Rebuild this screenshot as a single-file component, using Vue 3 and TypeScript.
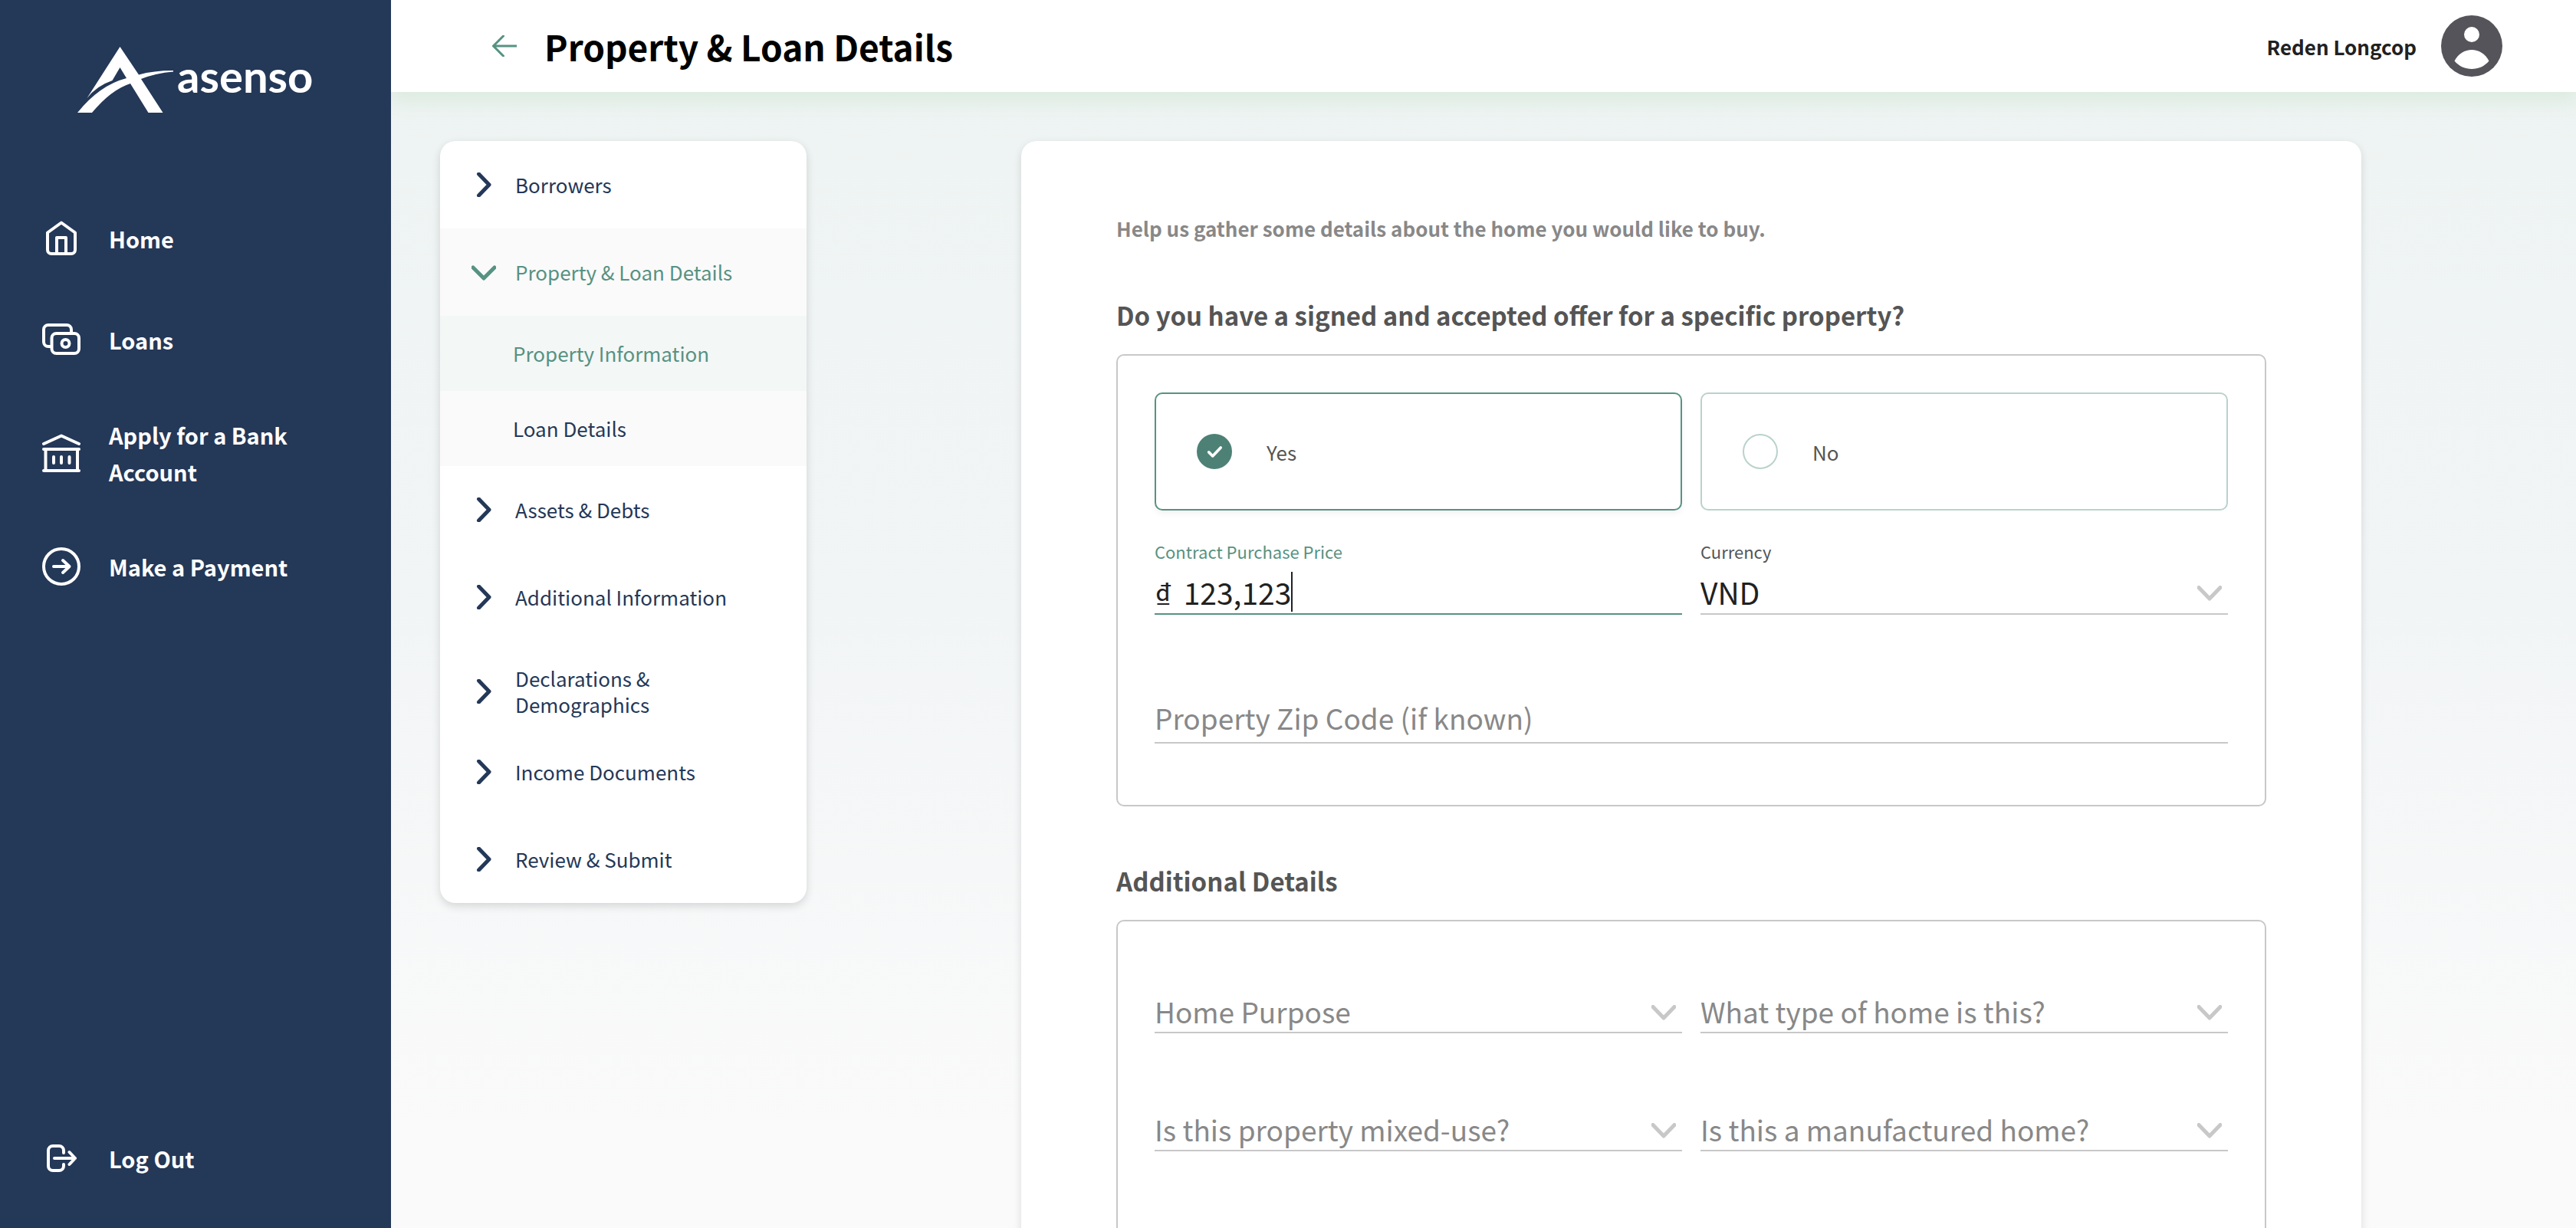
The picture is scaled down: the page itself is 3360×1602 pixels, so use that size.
<script setup lang="ts">
import { ref } from 'vue'

interface Step {
  label: string
  open?: boolean
  wrap?: boolean
  children?: { label: string; active?: boolean }[]
}

const steps: Step[] = [
  { label: 'Borrowers' },
  {
    label: 'Property & Loan Details',
    open: true,
    children: [{ label: 'Property Information', active: true }, { label: 'Loan Details' }],
  },
  { label: 'Assets & Debts' },
  { label: 'Additional Information' },
  { label: 'Declarations & Demographics', wrap: true },
  { label: 'Income Documents' },
  { label: 'Review & Submit' },
]

const details = [
  { id: 'purpose', label: 'Home Purpose' },
  { id: 'home-type', label: 'What type of home is this?' },
  { id: 'mixed-use', label: 'Is this property mixed-use?' },
  { id: 'manufactured', label: 'Is this a manufactured home?' },
]

const offer = ref<'yes' | 'no'>('yes')
const price = ref('123,123')
const currency = ref('VND')
const zip = ref('')
</script>

<template>
  <div class="app">
    <aside class="sidebar">
      <a href="#" class="logo" aria-label="asenso">
        <svg class="mark" viewBox="101 61 126 86">
          <path d="M156.500 61 L181 97.500 Q200 92 226 92 V93.500 Q203 95.500 184 103 L212.500 147 H193.500 L170 109 Q145 117 120 147 H101 Q130 111 165 102 L156.500 88 L146.500 105 Q126 112 113.500 128 Z" />
        </svg>
        <span class="brand">asenso</span>
      </a>
      <nav class="nav">
        <a href="#" class="nav-item">
          <svg viewBox="0 0 50 50">
            <path d="M25 4.500 L43 17.500 V40 a5 5 0 0 1 -5 5 H12 a5 5 0 0 1 -5 -5 V17.500 Z M19 44 V24 H31 V44" />
          </svg>
          <span>Home</span>
        </a>
        <a href="#" class="nav-item">
          <svg viewBox="0 0 50 50">
            <path d="M12 34 H8 a6 6 0 0 1 -6 -6 V12 a6 6 0 0 1 6 -6 H32 a6 6 0 0 1 6 6 V16" />
            <rect x="12.500" y="17" width="35.500" height="26" rx="6" />
            <circle cx="30.500" cy="30" r="5" />
          </svg>
          <span>Loans</span>
        </a>
        <a href="#" class="nav-item">
          <svg viewBox="0 0 50 50">
            <path d="M2 13 L25 2.500 L48 13 M2 20 H48 M2 48 H48 M4.500 20 V48 M46 20 V48 M15 30 V38 M25 30 V38 M35.500 30 V38" />
          </svg>
          <span class="two-line">Apply for a Bank Account</span>
        </a>
        <a href="#" class="nav-item">
          <svg viewBox="0 0 50 50">
            <circle cx="25" cy="25" r="23" />
            <path d="M15 25 H35 M27 17 L35.500 25 L27 33" />
          </svg>
          <span>Make a Payment</span>
        </a>
      </nav>
      <a href="#" class="nav-item logout">
        <svg viewBox="0 0 50 50">
          <path d="M28 18 V15 a6 6 0 0 0 -6 -6 H14 a6 6 0 0 0 -6 6 V35 a6 6 0 0 0 6 6 H22 a6 6 0 0 0 6 -6 V33 M16 25 H43 M35.500 17 L43 25 L35.500 33" />
        </svg>
        <span>Log Out</span>
      </a>
    </aside>

    <div class="page">
      <header class="topbar">
        <button type="button" class="back" aria-label="Back">
          <svg viewBox="0 0 32 28">
            <path d="M14.500 1 L1.500 14 L14.500 27 M1.500 14 H32" />
          </svg>
        </button>
        <h1>Property &amp; Loan Details</h1>
        <button type="button" class="user">
          <span>Reden Longcop</span>
          <svg viewBox="0 0 80 80">
            <circle cx="40" cy="40" r="40" fill="#54545a" />
            <circle cx="40" cy="25" r="10" fill="#fff" />
            <path d="M17.500 59.500 C27 40 53 40 62.500 59.500 C51 73.500 29 73.500 17.500 59.500 Z" fill="#fff" />
          </svg>
        </button>
      </header>

      <div class="content">
        <nav class="stepper">
          <template v-for="step in steps" :key="step.label">
            <button type="button" class="step" :class="{ open: step.open, wrap: step.wrap }">
              <svg viewBox="0 0 32 32">
                <path v-if="step.open" d="M2 10 L16 24 L30 10" />
                <path v-else d="M9.500 2 L23 16 L9.500 30" />
              </svg>
              <span>{{ step.label }}</span>
            </button>
            <a
              v-for="child in step.children"
              :key="child.label"
              href="#"
              class="substep"
              :class="{ active: child.active }"
            >{{ child.label }}</a>
          </template>
        </nav>

        <main class="form-column">
          <form class="card" @submit.prevent>
            <p class="intro">Help us gather some details about the home you would like to buy.</p>

            <h2 id="offer-title">Do you have a signed and accepted offer for a specific property?</h2>
            <section class="box" aria-labelledby="offer-title">
              <div class="grid">
                <label class="option" :class="{ selected: offer === 'yes' }">
                  <input v-model="offer" type="radio" name="offer" value="yes" />
                  <svg class="tick" viewBox="0 0 46 46"><path d="M15 24 L20.500 29.500 L32 17.500" /></svg>
                  <span>Yes</span>
                </label>
                <label class="option" :class="{ selected: offer === 'no' }">
                  <input v-model="offer" type="radio" name="offer" value="no" />
                  <svg class="tick" viewBox="0 0 46 46"><path d="M15 24 L20.500 29.500 L32 17.500" /></svg>
                  <span>No</span>
                </label>
                <div class="field focused">
                  <label for="price">Contract Purchase Price</label>
                  <div class="line">
                    <span class="prefix">₫</span>
                    <input id="price" v-model="price" type="text" inputmode="numeric" />
                    <span class="caret"></span>
                  </div>
                </div>
                <div class="field">
                  <label for="currency">Currency</label>
                  <div class="line">
                    <select id="currency" v-model="currency">
                      <option>VND</option>
                    </select>
                    <svg class="arrow" viewBox="0 0 32 20"><path d="M2 2.500 L16 17 L30 2.500" /></svg>
                  </div>
                </div>
              </div>
              <div class="line zip">
                <input v-model="zip" type="text" placeholder="Property Zip Code (if known)" aria-label="Property Zip Code (if known)" />
              </div>
            </section>

            <h2 id="details-title" class="second">Additional Details</h2>
            <section class="box details" aria-labelledby="details-title">
              <div class="grid detail-grid">
                <div v-for="item in details" :key="item.id" class="line">
                  <select :id="item.id" class="empty" :aria-label="item.label">
                    <option>{{ item.label }}</option>
                  </select>
                  <svg class="arrow" viewBox="0 0 32 20"><path d="M2 2.500 L16 17 L30 2.500" /></svg>
                </div>
              </div>
            </section>
          </form>
        </main>
      </div>
    </div>
  </div>
</template>

<style>
body {
  margin: 0;
}
</style>

<style scoped>
* {
  box-sizing: border-box;
}

.app {
  display: flex;
  height: 100vh;
  overflow: hidden;
  font-family: 'Noto Sans CJK SC', 'Noto Sans', sans-serif;
  font-size: 26px;
  color: #212121;
}

button,
input,
select {
  font: inherit;
  color: inherit;
  background: none;
  border: 0;
  margin: 0;
  padding: 0;
}

a {
  color: inherit;
  text-decoration: none;
}

svg {
  flex: none;
  fill: none;
  stroke-linecap: round;
  stroke-linejoin: round;
}

/* Sidebar */
.sidebar {
  display: flex;
  flex-direction: column;
  flex: none;
  width: 510px;
  padding: 61px 55px 67px;
  background: #243858;
  color: #fff;
}

.logo {
  display: flex;
  align-items: flex-start;
  gap: 4px;
  height: 86px;
  padding-left: 46px;
}

.mark {
  width: 126px;
  height: 86px;
  fill: #fff;
}

.brand {
  font-family: Lato, sans-serif;
  font-size: 58px;
  font-weight: 700;
  line-height: 76px;
}

.nav {
  display: flex;
  flex-direction: column;
  gap: 84px;
  margin-top: 140px;
}

.nav-item {
  display: flex;
  align-items: center;
  gap: 37px;
  height: 48px;
  font-size: 29px;
  font-weight: 700;
  line-height: 48px;
}

.nav-item:has(.two-line) {
  height: 80px;
}

.nav-item svg {
  width: 50px;
  height: 50px;
  stroke: #fff;
  stroke-width: 4;
}

.two-line {
  width: 256px;
}

.logout {
  margin-top: auto;
}

/* Header */
.page {
  display: flex;
  flex: 1;
  flex-direction: column;
  min-width: 0;
  overflow: hidden;
  background: linear-gradient(#edf3f2, #f2f5f6 50%, #fafafa 92%);
}

.topbar {
  display: flex;
  flex: none;
  align-items: center;
  height: 120px;
  padding: 0 96px 0 132px;
  background: #fff;
  box-shadow: 0 8px 24px 4px #dcebdf;
}

.back {
  display: flex;
}

.back svg {
  width: 32px;
  height: 28px;
  stroke: #579282;
  stroke-width: 3;
}

h1 {
  flex: 1;
  margin: 0 0 0 36px;
  font-size: 46px;
  font-weight: 700;
  line-height: 64px;
  color: #000;
}

.user {
  display: flex;
  align-items: center;
  gap: 32px;
  font-weight: 700;
}

.user svg {
  width: 80px;
  height: 80px;
}

/* Stepper */
.content {
  display: flex;
  flex: 1;
  align-items: flex-start;
  min-height: 0;
  padding: 64px 0 0 64px;
}

.stepper {
  display: flex;
  flex: none;
  flex-direction: column;
  width: 478px;
  overflow: hidden;
  border-radius: 20px;
  background: #fff;
  box-shadow: 0 4px 12px rgba(0, 0, 0, 0.14);
  color: #243858;
}

.step {
  display: flex;
  align-items: center;
  gap: 25px;
  height: 114px;
  padding: 0 64px 0 41px;
  line-height: 34px;
  text-align: left;
}

.step.wrap {
  padding-top: 18px;
}

.step svg {
  width: 32px;
  height: 32px;
  stroke: currentColor;
  stroke-width: 5;
}

.step.open {
  background: #fafafa;
  color: #579282;
}

.substep {
  padding-left: 95px;
  background: #fafafa;
  line-height: 98px;
}

.substep.active {
  background: #f3f7f6;
  color: #579282;
}

/* Form */
.form-column {
  display: flex;
  flex: 1;
  justify-content: center;
  min-width: 0;
}

.card {
  width: 100%;
  max-width: 1748px;
  padding: 92px 124px 124px;
  border-radius: 20px;
  background: #fff;
  box-shadow: 0 4px 12px rgba(0, 0, 0, 0.12);
}

.intro {
  margin: 0 0 60px;
  font-weight: 700;
  line-height: 44px;
  color: #888;
}

h2 {
  margin: 0 0 20px;
  font-size: 33px;
  font-weight: 700;
  line-height: 62px;
  color: #555;
}

h2.second {
  margin-top: 66px;
}

.box {
  padding: 48px;
  border: 2px solid #c8c8c8;
  border-radius: 10px;
}

.box:not(.details) {
  padding-bottom: 80px;
}

.grid {
  display: grid;
  grid-template-columns: 1fr 1fr;
  column-gap: 24px;
}

.option {
  display: flex;
  align-items: center;
  gap: 45px;
  height: 154px;
  padding-left: 53px;
  border: 2px solid #bad2cc;
  border-radius: 10px;
  color: #555;
}

.option input {
  position: absolute;
  appearance: none;
}

.option.selected {
  border-color: #579282;
  box-shadow: 0 4px 8px rgba(0, 0, 0, 0.05);
}

.tick {
  width: 46px;
  height: 46px;
  border: 2px solid #bad2cc;
  border-radius: 50%;
}

.selected .tick {
  border-color: #4e8176;
  background: #4e8176;
  stroke: #fff;
  stroke-width: 4;
}

.field {
  display: flex;
  flex-direction: column;
  gap: 3px;
  padding-top: 33px;
}

.field label {
  font-size: 22px;
  line-height: 40px;
  color: #555;
}

.line {
  display: flex;
  align-items: center;
  height: 60px;
  padding-top: 4px;
  border-bottom: 2px solid #c8c8c8;
  font-size: 37px;
  line-height: 54px;
}

.field .line {
  padding-top: 2px;
  font-size: 39px;
}

.line input,
.line select {
  flex: 1;
  min-width: 0;
  height: 54px;
  outline: 0;
  appearance: none;
}

.line input::placeholder {
  color: #888;
  opacity: 1;
}

.line .empty {
  color: #888;
}

.arrow {
  width: 32px;
  height: 20px;
  margin: 4px 8px 0 -40px;
  pointer-events: none;
  stroke: #c8c8c8;
  stroke-width: 5;
}

.focused label {
  color: #579282;
}

.focused .line {
  border-color: #579282;
}

.prefix {
  margin-right: 16px;
}

.focused .line input {
  flex: none;
  field-sizing: content;
}

.caret {
  width: 2px;
  height: 52px;
  background: #212121;
}

.zip {
  height: 70px;
  margin-top: 98px;
}

.details {
  padding-top: 86px;
  padding-bottom: 140px;
}

.detail-grid {
  row-gap: 94px;
}
</style>
